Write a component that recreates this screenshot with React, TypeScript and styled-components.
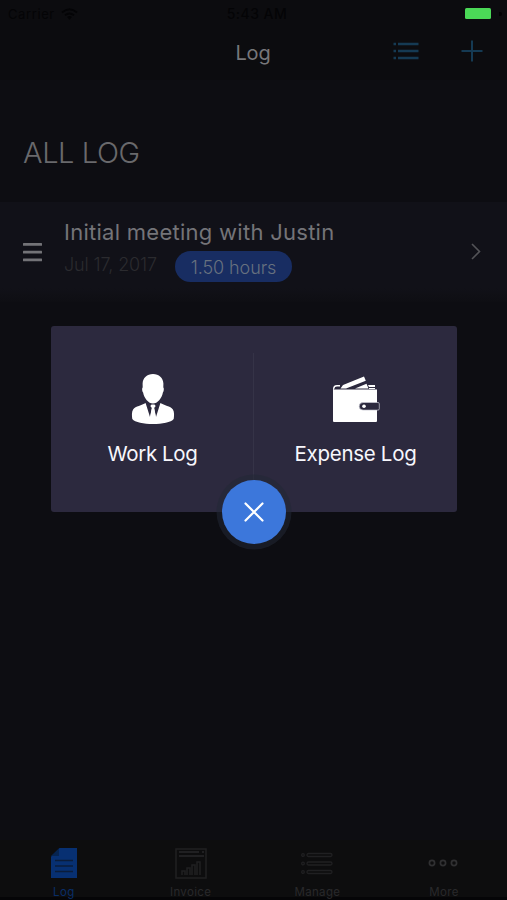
import React from "react";
import styled, { createGlobalStyle } from "styled-components";

const GlobalStyle = createGlobalStyle`
  * { box-sizing: border-box; }
  body { margin: 0; background: #0d0d12; font-family: Inter, "Liberation Sans", sans-serif; }
`;

const Screen = styled.div`
  position: relative;
  display: flex;
  flex-direction: column;
  width: 507px;
  height: 900px;
  overflow: hidden;
  background: #0d0d12;
`;

const Header = styled.header`
  height: 80px;
  background: #0c0c0f;
`;

const StatusBar = styled.div`
  display: grid;
  grid-template-columns: 1fr auto 1fr;
  align-items: center;
  height: 27px;
  padding: 0 5px 0 8px;
  color: #040406;
  font-size: 13px;
  line-height: 16px;
`;

const Carrier = styled.div`
  display: flex;
  align-items: center;
  gap: 6px;
  letter-spacing: 0.6px;
`;

const Clock = styled.div`
  font-weight: 500;
  font-size: 14px;
  letter-spacing: 0.45px;
  transform: translateX(2px);
`;

const BatteryArea = styled.div`
  display: flex;
  justify-content: flex-end;
  align-items: center;
  gap: 8px;
`;

const Battery = styled.div`
  width: 26px;
  height: 11px;
  border-radius: 1.5px;
  background: #4bd957;
`;

const BatteryTip = styled.div`
  width: 3px;
  height: 4px;
  border-radius: 0 2px 2px 0;
  background: #020204;
`;

const NavBar = styled.div`
  display: grid;
  grid-template-columns: 1fr auto 1fr;
  align-items: center;
  height: 50px;
  padding: 0 24px 0 23px;
`;

const NavTitle = styled.h1`
  margin: 0;
  padding-top: 2px;
  color: #77777a;
  font-size: 20px;
  font-weight: 400;
  line-height: 24px;
  letter-spacing: -0.2px;
`;

const NavActions = styled.div`
  display: flex;
  justify-content: flex-end;
  align-items: center;
  gap: 42px;
  padding-bottom: 3px;
`;

const Section = styled.div`
  height: 122px;
  padding: 55px 23px 0;
`;

const SectionTitle = styled.h2`
  margin: 0;
  color: #69696c;
  font-size: 29px;
  font-weight: 300;
  line-height: 36px;
  letter-spacing: -0.4px;
`;

const Row = styled.div`
  display: flex;
  align-items: center;
  height: 100px;
  padding: 0 26px 0 23px;
  background: linear-gradient(#111118 0 86%, #0e0e13);
`;

const RowBody = styled.div`
  flex: 1;
  margin-left: 22px;
  height: 100%;
  padding-top: 16px;
`;

const RowTitle = styled.div`
  color: #747478;
  font-size: 22px;
  line-height: 28px;
  letter-spacing: 0.27px;
  white-space: nowrap;
`;

const RowMeta = styled.div`
  display: flex;
  align-items: flex-start;
  margin-top: 5px;
`;

const DateText = styled.span`
  width: 111px;
  color: #2b2b2f;
  font-size: 18px;
  font-weight: 300;
  line-height: 27px;
  letter-spacing: -0.12px;
  white-space: nowrap;
`;

const Pill = styled.span`
  display: flex;
  align-items: center;
  justify-content: center;
  width: 117px;
  height: 31px;
  padding-top: 1px;
  border-radius: 16px;
  background: #182d62;
  color: #67717f;
  font-size: 18px;
  font-weight: 300;
  letter-spacing: -0.1px;
`;

const Handle = styled.svg`
  margin-top: -1px;
`;

const Content = styled.main`
  flex: 1;
`;

const TabBar = styled.nav`
  display: grid;
  grid-template-columns: repeat(4, 1fr);
  height: 60px;
  background: #0d0d0e;
  border-bottom: 3px solid #050507;
`;

const Tab = styled.div<{ $active?: boolean }>`
  display: flex;
  flex-direction: column;
  align-items: center;
  padding: 8px 0 0 1px;
  color: ${(p) => (p.$active ? "#092d67" : "#29292b")};
  font-size: 11.5px;
  font-weight: 400;
  line-height: 14px;
  letter-spacing: 0.35px;
`;

const TabIcon = styled.svg`
  margin-bottom: 5px;
  flex: none;
`;

const Dialog = styled.div`
  position: absolute;
  left: 51px;
  top: 326px;
  display: grid;
  grid-template-columns: 1fr 1fr;
  width: 406px;
  height: 186px;
  border-radius: 3px;
  background: #2c293e;
`;

const Divider = styled.div`
  position: absolute;
  left: 202px;
  top: 27px;
  width: 1px;
  height: 130px;
  background: #353347;
`;

const Choice = styled.div<{ $spacing: string }>`
  display: flex;
  flex-direction: column;
  align-items: center;
  padding-top: 46px;
  color: #f7f7fc;
  font-size: 20.5px;
  line-height: 26px;
  letter-spacing: ${(p) => p.$spacing};
`;

const ChoiceIcon = styled.svg`
  margin-bottom: 15px;
`;

const CloseButton = styled.button`
  position: absolute;
  left: 171px;
  top: 154px;
  display: flex;
  align-items: center;
  justify-content: center;
  width: 64px;
  height: 64px;
  padding: 0;
  border: 0;
  border-radius: 50%;
  background: #3c77db;
  box-shadow: 0 0 0 5.5px rgba(35, 40, 52, 0.55);
`;

export default function App() {
  return (
    <>
      <GlobalStyle />
      <Screen>
        <Header>
          <StatusBar>
            <Carrier>
              Carrier
              <svg width="17" height="12" viewBox="0 0 17 12" fill="none" stroke="currentColor" strokeWidth="1.8">
                <path d="M1 4.5Q8.500-2 16 4.500M4 7.300q4.500-3.700 9 0" />
                <path d="m6 9 2.500 2.800L11 9Q8.500 7 6 9Z" fill="currentColor" stroke="none" />
              </svg>
            </Carrier>
            <Clock>5:43 AM</Clock>
            <BatteryArea>
              <Battery />
              <BatteryTip />
            </BatteryArea>
          </StatusBar>
          <NavBar>
            <span />
            <NavTitle>Log</NavTitle>
            <NavActions>
              <svg width="26" height="18" viewBox="0 0 26 18" fill="none" stroke="#153a53" strokeWidth="2.3">
                <path d="M5 2h20.500M5 9h20.500M5 16h20.500" />
                <path d="M.5 2H3M.5 9H3M.5 16H3" />
              </svg>
              <svg width="22" height="22" viewBox="0 0 22 22" fill="none" stroke="#153a53" strokeWidth="2">
                <path d="M11 .5v21M.5 11h21" />
              </svg>
            </NavActions>
          </NavBar>
        </Header>
        <Section>
          <SectionTitle>ALL LOG</SectionTitle>
        </Section>
        <Row>
          <Handle width="19" height="20" viewBox="0 0 19 20" fill="#737377">
            <rect y="1" width="19" height="2.800" rx=".5" />
            <rect y="8.700" width="19" height="2.800" rx=".5" />
            <rect y="16.400" width="19" height="2.800" rx=".5" />
          </Handle>
          <RowBody>
            <RowTitle>Initial meeting with Justin</RowTitle>
            <RowMeta>
              <DateText>Jul 17, 2017</DateText>
              <Pill>1.50 hours</Pill>
            </RowMeta>
          </RowBody>
          <svg width="10" height="18" viewBox="0 0 10 18" fill="none" stroke="#535357" strokeWidth="1.600">
            <path d="m1 1 7.500 7.500L1 16" />
          </svg>
        </Row>
        <Content />
        <TabBar>
          <Tab $active>
            <TabIcon width="28" height="32" viewBox="0 0 28 32">
              <path d="M9.500 0H27v30H1V8.500Z" fill="#073072" />
              <path d="M1 8 9 .5V8Z" fill="#062450" />
              <path d="M5 12.500h18M5 18h18M5 23.500h18" stroke="#0b1d3b" strokeWidth="1.300" />
            </TabIcon>
            Log
          </Tab>
          <Tab>
            <TabIcon width="32" height="32" viewBox="0 0 32 32" fill="none" stroke="#202022" strokeWidth="1.500">
              <rect x="1" y="1" width="30" height="29" />
              <path d="M4 4h20M27 4h2M4 8h25" strokeWidth="2" />
              <path d="M7 27v-4h3v4m2 0v-7h3v7m2 0V17h3v10m2 0V14h3v13" />
            </TabIcon>
            Invoice
          </Tab>
          <Tab>
            <TabIcon width="32" height="32" viewBox="0 0 32 32" fill="none" stroke="#202022" strokeWidth="1.300">
              {[6, 14.5, 23].map((y) => (
                <g key={y}>
                  <circle cx="2" cy={y + 1} r="1.300" />
                  <rect x="6" y={y - 0.5} width="25" height="3" rx="1.500" />
                </g>
              ))}
            </TabIcon>
            Manage
          </Tab>
          <Tab>
            <TabIcon width="32" height="32" viewBox="0 0 32 32" fill="none" stroke="#303032" strokeWidth="1.700">
              {[4, 15, 26].map((x) => (
                <circle key={x} cx={x} cy="15" r="2.600" />
              ))}
            </TabIcon>
            More
          </Tab>
        </TabBar>
        <Dialog>
          <Choice $spacing="-0.4px">
            <ChoiceIcon width="44" height="54" viewBox="0 0 44 54" fill="#fff">
              <path d="M22 2c6 0 10.200 4 10.400 9.500l-.1 4c1 .6.500 4-.4 5C30.800 26.500 26.500 31.500 22 31.500s-8.800-5-9.900-11c-.9-1-1.400-4.400-.4-5l-.1-4C11.800 6 16 2 22 2Z" />
              <path d="M14.600 31 19 45l1.800-9-1.500-2 1.200-1.500h3l1.200 1.500-1.500 2 1.800 9 4.400-14c3.800 2.500 10 3 12.500 6.500 1.500 2.300 1.300 6.500.8 9.500-5 6.700-36.400 6.700-41.400 0-.5-3-.7-7.200.8-9.500 2.500-3.500 8.700-4 12.500-6.500Z" />
              <path d="m21 36-1.700 8.500L22 48l2.700-3.500L23 36Z" />
            </ChoiceIcon>
            Work Log
          </Choice>
          <Choice $spacing="-0.3px">
            <ChoiceIcon width="48" height="54" viewBox="0 0 48 54">
              <path d="M1.500 17.500H45V49q0 1-1 1H2q-1 0-1-1V17Q1 13 5 13h3v1.500H5q-2.500 0-2.500 2Z" fill="#fff" />
              <path d="M8.500 16.500 11 13 32 4.500l1.800 4.300L14 16.500ZM23 16.500l11.500-4.800 2 4.800ZM36 13h7v2h-6ZM37 16h6v1h-6Z" fill="#fff" />
              <path d="M31 30.500h15q1.300 0 1.300 1.300v5q0 1.300-1.300 1.300H31a3.800 3.800 0 0 1 0-7.600Z" fill="#2c293e" stroke="#c9c8d2" strokeWidth=".7" />
              <circle cx="32" cy="34.300" r="1.800" fill="#fff" />
            </ChoiceIcon>
            Expense Log
          </Choice>
          <Divider />
          <CloseButton aria-label="Close">
            <svg width="20" height="20" viewBox="0 0 20 20" fill="none" stroke="#fff" strokeWidth="2.200" strokeLinecap="round">
              <path d="m1.500 1.500 17 17M18.500 1.500l-17 17" />
            </svg>
          </CloseButton>
        </Dialog>
      </Screen>
    </>
  );
}
